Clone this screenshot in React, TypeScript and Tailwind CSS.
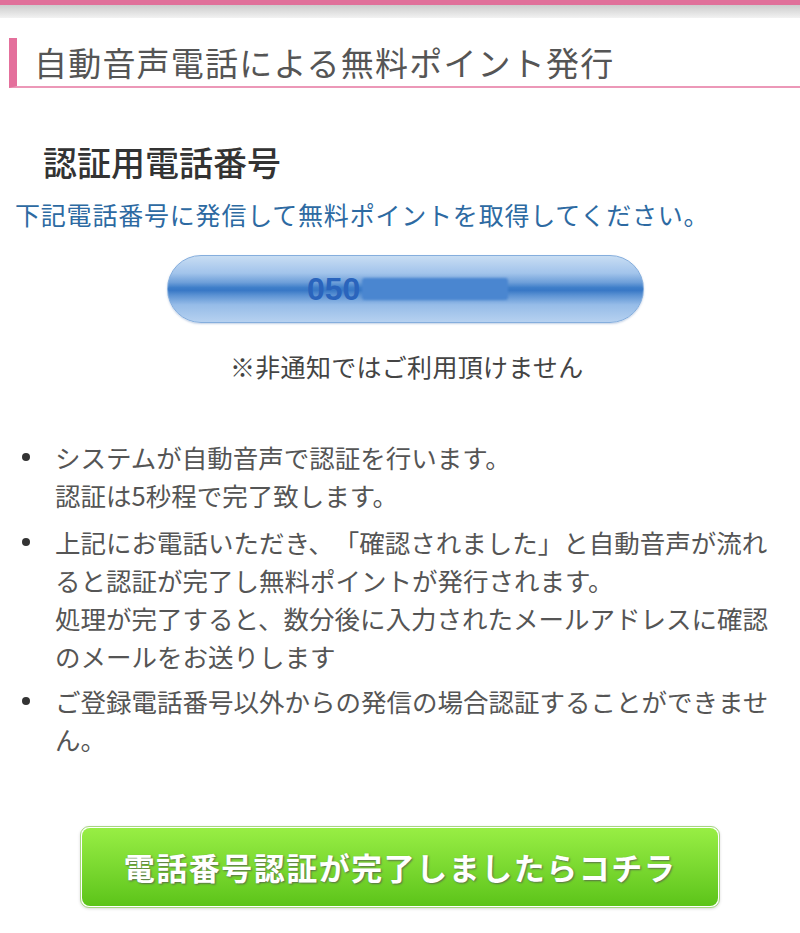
import React from "react";

export default function App() {
  return (
    <div className="w-[800px] h-[933px] overflow-hidden bg-white font-['Noto_Sans_CJK_JP','Noto_Sans',sans-serif] [text-spacing-trim:space-all]">
      <div className="h-[5px] bg-[#e0709a]" />
      <div className="h-[13px] bg-gradient-to-b from-[#cccccc] to-[#f2f2f2]" />

      <div className="mt-[20px] ml-[9px] flex h-[50px] items-center border-l-[8px] border-b-[2px] border-l-[#e4709c] border-b-[#ec98b8] pl-[17px]">
        <span className="text-[33px] leading-none tracking-[1.2px] text-[#555555]">
          自動音声電話による無料ポイント発行
        </span>
      </div>

      <h2 className="mt-[54px] ml-[43px] text-[34px] leading-[40px] font-medium text-[#333333]">
        認証用電話番号
      </h2>

      <p className="mt-[17px] ml-[15px] text-[25px] leading-[30px] tracking-[0.8px] text-[#2d6aa2]">
        下記電話番号に発信して無料ポイントを取得してください。
      </p>

      <div className="mt-[26px] ml-[167px] flex h-[68px] w-[477px] items-center rounded-full border border-[#85aedd] bg-[linear-gradient(to_bottom,#c8ddf3_0%,#a2c4eb_26%,#6e9fd9_40%,#3e7ec9_48%,#3878c6_52%,#5e94d4_60%,#96bce8_74%,#b6d1f0_100%)] pl-[139px] shadow-[0_1px_2px_rgba(80,120,180,0.35)]">
        <span className="font-['Liberation_Sans',sans-serif] text-[32px] font-bold leading-none text-[#2a64bc]">
          050
        </span>
        <span className="ml-[2px] h-[22px] w-[146px] rounded-[3px] bg-[#4a86d0] blur-[1px]" />
      </div>

      <p className="mt-[28px] ml-[230px] text-[25px] leading-[30px] tracking-[0.3px] text-[#444444]">
        ※非通知ではご利用頂けません
      </p>

      <ul className="mt-[57px] text-[25.5px] leading-[38px] text-[#555555]">
        <li className="mb-[9px] flex">
          <span className="ml-[22px] mt-[15px] h-[8px] w-[8px] shrink-0 rounded-full bg-[#333333]" />
          <span className="ml-[25px] w-[722px]">
            システムが自動音声で認証を行います。
            <br />
            認証は5秒程で完了致します。
          </span>
        </li>
        <li className="mb-[7px] flex">
          <span className="ml-[22px] mt-[15px] h-[8px] w-[8px] shrink-0 rounded-full bg-[#333333]" />
          <span className="ml-[25px] w-[722px]">
            上記にお電話いただき、「確認されました」と自動音声が流れると認証が完了し無料ポイントが発行されます。
            <br />
            処理が完了すると、数分後に入力されたメールアドレスに確認のメールをお送りします
          </span>
        </li>
        <li className="flex">
          <span className="ml-[22px] mt-[15px] h-[8px] w-[8px] shrink-0 rounded-full bg-[#333333]" />
          <span className="ml-[25px] w-[722px]">
            ご登録電話番号以外からの発信の場合認証することができません。
          </span>
        </li>
      </ul>

      <div className="mt-[68px] ml-[80px] w-[640px] rounded-[9px] border border-[#a6d680] bg-white p-[1px] shadow-[0_1px_3px_rgba(0,0,0,0.15)]">
        <div className="flex h-[78px] items-center justify-center rounded-[8px] bg-gradient-to-b from-[#98ee44] to-[#5cc418]">
          <span className="text-[31px] font-bold tracking-[1.5px] text-white [text-shadow:1px_1px_2px_#5a6e4a]">
            電話番号認証が完了しましたらコチラ
          </span>
        </div>
      </div>
    </div>
  );
}
